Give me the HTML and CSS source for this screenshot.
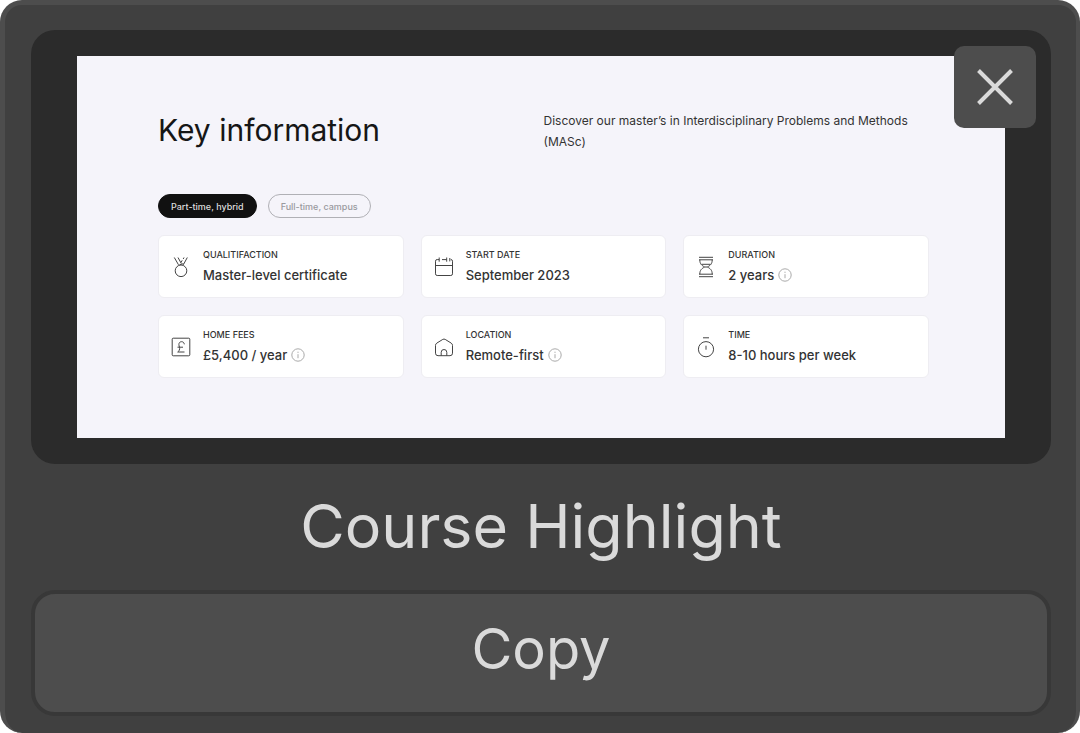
FILE: index.html
```html
<!DOCTYPE html>
<html lang="en">
<head>
    <meta charset="UTF-8">
    <meta name="viewport" content="width=device-width, initial-scale=1.0">
    <title>Course Highlight</title>
    <link rel="stylesheet" href="styles.css">
</head>
<body>

    <!-- Shared info glyph -->
    <svg class="defs" width="0" height="0" aria-hidden="true">
        <symbol id="info" viewBox="0 0 14 14">
            <circle cx="7" cy="7" r="6.2"/>
            <path d="M7 6.2v4M7 3.7v1.2"/>
        </symbol>
    </svg>

    <main class="panel">
        <div class="frame">
            <section class="preview">
                <header class="intro">
                    <h2>Key information</h2>
                    <p>Discover our master’s in Interdisciplinary Problems and Methods (MASc)</p>
                </header>

                <div class="modes">
                    <button type="button" class="mode active">Part-time, hybrid</button>
                    <button type="button" class="mode">Full-time, campus</button>
                </div>

                <div class="facts">
                    <div class="fact">
                        <svg class="icon" viewBox="0 0 22 22">
                            <circle cx="11" cy="14.8" r="5.8"/>
                            <path d="M4.3 1.5l4.2 7.3M8 1.5l3.3 6M11 6.5l1.2-2.2M14 1.5l-.8 1.5M17.3 1.5l-4 7.3M9.5 8.7l4-1"/>
                        </svg>
                        <div>
                            <h3>QUALITIFACTION</h3>
                            <p>Master-level certificate</p>
                        </div>
                    </div>
                    <div class="fact">
                        <svg class="icon" viewBox="0 0 22 22">
                            <path d="M2.5 9.5h17M4.5 3.5h-.3q-1.7 0-1.7 1.7v12.6q0 1.7 1.7 1.7h13.6q1.7 0 1.7-1.7V5.2q0-1.7-1.7-1.7M6.2 1.5v4.2M4.3 3.6h1.9M9 3.6h4.7M13.7 1.5v4.2M16.8 2v3.4"/>
                        </svg>
                        <div>
                            <h3>START DATE</h3>
                            <p>September 2023</p>
                        </div>
                    </div>
                    <div class="fact">
                        <svg class="icon" viewBox="0 0 22 22">
                            <path d="M4 1.3h14M4 3.8h14M4 18.2h14M4 20.7h14M4.8 3.8c0 4.5 2.2 5.6 4.7 7.2-2.5 1.6-4.7 2.7-4.7 7.2M17.2 3.8c0 4.5-2.2 5.6-4.7 7.2 2.5 1.6 4.7 2.7 4.7 7.2M6.5 8.3h9M9.5 11h3"/>
                        </svg>
                        <div>
                            <h3>DURATION</h3>
                            <p>2 years <svg class="info"><use href="#info"/></svg></p>
                        </div>
                    </div>
                    <div class="fact">
                        <svg class="icon" viewBox="0 0 22 22">
                            <rect x="2.2" y="2.2" width="17.6" height="17.6" rx="1"/>
                            <path d="M14.3 8.3c-.2-1.7-1.2-2.6-2.7-2.6-1.8 0-2.7 1.2-2.7 2.8 0 2.2 1.5 3.3.3 5.9-.3.6-.7 1.1-1.5 1.6h6.8M7.5 11.2h5.5"/>
                        </svg>
                        <div>
                            <h3>HOME FEES</h3>
                            <p>£5,400 / year <svg class="info"><use href="#info"/></svg></p>
                        </div>
                    </div>
                    <div class="fact">
                        <svg class="icon" viewBox="0 0 22 22">
                            <path d="M2.5 9.5q0-1.6 1.3-2.4L9.8 3.4q1.2-.7 2.4 0l6 3.7q1.3.8 1.3 2.4v7.7q0 2.5-2.5 2.5H5q-2.5 0-2.5-2.5zM8.2 19.7v-3.4a2.8 2.8 0 0 1 5.6 0v3.4"/>
                        </svg>
                        <div>
                            <h3>LOCATION</h3>
                            <p>Remote-first <svg class="info"><use href="#info"/></svg></p>
                        </div>
                    </div>
                    <div class="fact">
                        <svg class="icon" viewBox="0 0 22 22">
                            <circle cx="11" cy="13.2" r="7.6"/>
                            <path d="M8 1.8h6M11 9.7v4"/>
                        </svg>
                        <div>
                            <h3>TIME</h3>
                            <p>8-10 hours per week</p>
                        </div>
                    </div>
                </div>
            </section>

            <button type="button" class="close" aria-label="Close">
                <svg viewBox="0 0 36 36"><path d="M1.5 1.5l33 33M34.5 1.5l-33 33"/></svg>
            </button>
        </div>

        <h1>Course Highlight</h1>
        <button type="button" class="copy">Copy</button>
    </main>

</body>
</html>
```
FILE: styles.css
```css
* {
    box-sizing: border-box;
}
body {
    margin: 0;
    background-color: #fff;
    font-family: Inter, "Liberation Sans", sans-serif;
}
h1, h2, h3, p {
    margin: 0;
    font-weight: 400;
}
button {
    font-family: inherit;
    cursor: pointer;
}
svg {
    fill: none;
    stroke: currentColor;
}
.defs {
    position: absolute;
}
.panel {
    padding: 25px 25px 17px 26px;
    border: 5px solid #4d4d4d;
    border-right-width: 4px;
    border-bottom: 0;
    border-radius: 22px;
    background-color: #404040;
    color: #dadada;
    text-align: center;
}
.frame {
    position: relative;
    padding: 26px 46px;
    border-radius: 24px;
    background-color: #2b2b2b;
}

/* Course page preview */
.preview {
    padding: 54px 76px 60px 81px;
    background-color: #f5f4fa;
    color: #333;
    text-align: left;
}
.intro {
    display: grid;
    grid-template-columns: 1fr 1fr;
    min-height: 66px;
}
.intro h2 {
    color: #161616;
    font-size: 30px;
    line-height: 40px;
}
.intro p {
    font-size: 12px;
    line-height: 21px;
}
.modes {
    display: flex;
    gap: 11px;
    margin: 18px 0 17px;
}
.mode {
    height: 24px;
    padding: 0 12px;
    border: 1px solid #b0b0b5;
    border-radius: 12px;
    background-color: transparent;
    color: #9a9a9f;
    font-size: 9px;
    font-weight: 500;
}
.mode.active {
    border-color: #111;
    background-color: #111;
    color: #ddd;
}
.facts {
    display: grid;
    grid-template-columns: repeat(3, 1fr);
    gap: 17px;
}
.fact {
    display: flex;
    align-items: center;
    gap: 11px;
    min-height: 63px;
    padding: 10px 11px;
    border: 1px solid #eeedf2;
    border-radius: 6px;
    background-color: #fff;
}
.icon {
    flex: none;
    width: 22px;
    height: 22px;
    color: #444;
}
.fact h3 {
    font-size: 9px;
    font-weight: 500;
    line-height: 16px;
}
.fact p {
    display: flex;
    align-items: center;
    gap: 4px;
    font-size: 13px;
    font-weight: 500;
    line-height: 24px;
}
.info {
    width: 14px;
    height: 14px;
    color: #aaa;
}

.close {
    position: absolute;
    top: 16px;
    right: 15px;
    display: grid;
    place-items: center;
    width: 82px;
    height: 82px;
    padding: 0;
    border: 0;
    border-radius: 10px;
    background-color: #4d4d4d;
    color: #dadada;
}
.close svg {
    width: 36px;
    height: 36px;
    stroke-width: 4;
}
h1 {
    padding: 25px 0 27px;
    font-size: 61px;
    line-height: 74px;
}
.copy {
    display: block;
    width: 100%;
    height: 126px;
    padding: 0 0 8px;
    border: 4px solid #383838;
    border-radius: 24px;
    background-color: #4d4d4d;
    color: #dadada;
    font-size: 56px;
    line-height: 68px;
}
```
